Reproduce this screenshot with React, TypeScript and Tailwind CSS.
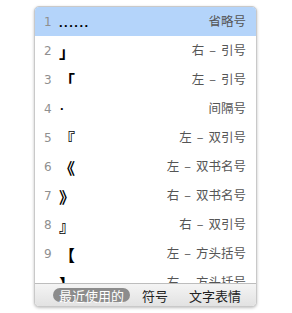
import React from "react";

const rows = [
  { n: "1", s: "......", d: ["省略号"], dots: true },
  { n: "2", s: "」", d: ["右", "引号"] },
  { n: "3", s: "「", d: ["左", "引号"] },
  { n: "4", s: "·", d: ["间隔号"], mid: true },
  { n: "5", s: "『", d: ["左", "双引号"] },
  { n: "6", s: "《", d: ["左", "双书名号"] },
  { n: "7", s: "》", d: ["右", "双书名号"] },
  { n: "8", s: "』", d: ["右", "双引号"] },
  { n: "9", s: "【", d: ["左", "方头括号"] },
  { n: "", s: "】", d: ["右", "方头括号"] },
];

export default function App() {
  return (
    <div className="w-[292px] h-[313px] bg-white overflow-hidden pt-[6px] pl-[34px]">
      <div className="w-[223px] h-[301px] rounded-[5px] border border-[#c9c9c9] bg-white shadow-[0_1px_3px_rgba(0,0,0,0.25)] overflow-hidden flex flex-col">
        <div className="h-[276px] overflow-hidden flex flex-col">
          {rows.map((r, i) => (
            <div
              key={i}
              className={`h-[29px] shrink-0 flex items-center pl-[9px] pr-[10px] ${i === 0 ? "bg-[#b4d4fa]" : ""}`}
            >
              <span className="w-[15px] text-[12px] text-[#8f8f8f] font-['DejaVu_Sans',sans-serif]">{r.n}</span>
              {r.dots ? (
                <span className="text-[13px] font-bold text-black font-['Liberation_Sans',sans-serif] tracking-[1.5px] pt-[2px]">{r.s}</span>
              ) : r.mid ? (
                <span className="text-[13px] font-bold text-black font-['Liberation_Sans',sans-serif] ml-[1px]">{r.s}</span>
              ) : (
                <span className="text-[16px] font-bold text-black font-['Noto_Sans_CJK_SC',sans-serif] leading-none">{r.s}</span>
              )}
              <span className="ml-auto flex items-center text-[12.5px] text-[#555] font-['Noto_Sans_CJK_SC',sans-serif]">
                {r.d.length === 2 ? (
                  <>
                    <span>{r.d[0]}</span>
                    <span className="mx-[5px]">–</span>
                    <span>{r.d[1]}</span>
                  </>
                ) : (
                  <span>{r.d[0]}</span>
                )}
              </span>
            </div>
          ))}
        </div>
        <div className="flex-1 border-t border-[#bdbdbd] bg-gradient-to-b from-[#f4f4f4] to-[#e2e2e2] flex items-center text-[13px] font-['Noto_Sans_CJK_SC',sans-serif] text-[#222]">
          <span className="ml-[18px] h-[14px] px-[6px] rounded-full bg-[#8c8c8c] text-white flex items-center leading-none">最近使用的</span>
          <span className="ml-[12px] leading-none">符号</span>
          <span className="ml-[21px] leading-none">文字表情</span>
        </div>
      </div>
    </div>
  );
}
